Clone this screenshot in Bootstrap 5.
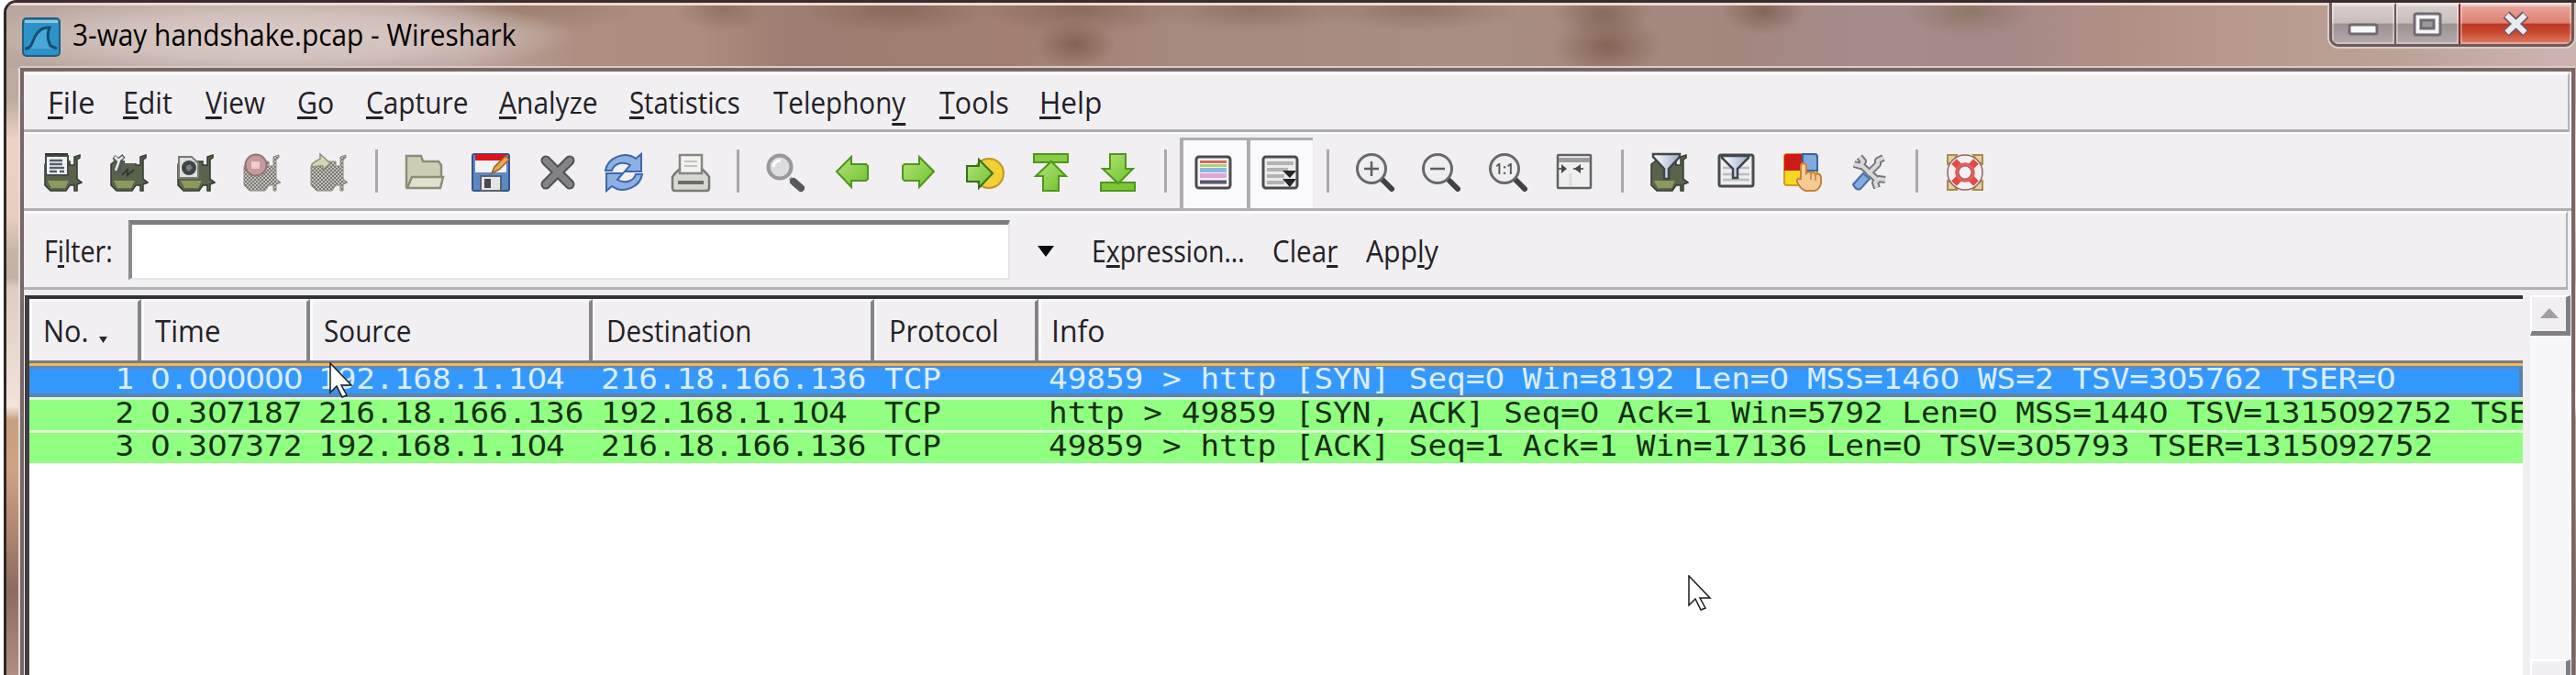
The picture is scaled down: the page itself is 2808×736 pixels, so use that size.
<!DOCTYPE html>
<html lang="en">
<head>
<meta charset="utf-8">
<meta name="viewport" content="width=device-width, initial-scale=1">
<title>3-way handshake.pcap - Wireshark</title>
<link href="https://cdn.jsdelivr.net/npm/bootstrap@5.3.0/dist/css/bootstrap.min.css" rel="stylesheet">
<style>
body{margin:0;background:#fff;font-family:"Open Sans","Noto Sans",sans-serif;font-size:32.5px;line-height:1;color:#232127;overflow:hidden}
.win{height:736px;margin-left:4px;border-top:3px solid #3a2c2e;border-left:3px solid #2d2728;border-top-left-radius:14px;overflow:hidden;position:relative;
 background:linear-gradient(180deg,#bfaaa2 0,#c0aaa0 105px,#ecd3c5 150px,#e6cdbd 235px,#c9b5a8 270px,#c3b0a4 300px,#dfcbc2 310px,#ecdcd4 400px,#f0e4dd 440px,#c8a080 455px,#cfa283 510px,#b98d75 560px,#8d6c60 640px,#b08f83 736px)}
.titlebar{height:71px;padding-left:17px;border-top:3px solid #ecd9d2;
 background:
 radial-gradient(ellipse 330px 46px at 290px 34px,#dccdc8 0,#d6c6c1cc 55%,transparent 100%),
 radial-gradient(ellipse 50px 24px at 780px 4px,#85695aaa,transparent),
 radial-gradient(ellipse 100px 26px at 970px 4px,#80604faa,transparent),
 radial-gradient(ellipse 110px 28px at 1170px 4px,#80604faa,transparent),
 radial-gradient(ellipse 44px 26px at 1165px 42px,#7c594acc,transparent),
 radial-gradient(ellipse 110px 24px at 1360px 4px,#83685baa,transparent),
 radial-gradient(ellipse 110px 24px at 1540px 4px,#83685baa,transparent),
 radial-gradient(ellipse 55px 26px at 1740px 8px,#7c5f52bb,transparent),
 radial-gradient(ellipse 60px 36px at 1745px 44px,#7c5a4bcc,transparent),
 radial-gradient(ellipse 45px 26px at 1915px 6px,#7a5c50cc,transparent),
 radial-gradient(ellipse 70px 28px at 2140px 6px,#88705fbb,transparent),
 radial-gradient(ellipse 130px 30px at 560px 0,#8a6a5699,transparent),
 linear-gradient(90deg,#baa79f 0,#bba59e 500px,#ae8e81 620px,#ae8c7f 750px,#9d7c71 860px,#a27f72 1100px,#a68a80 1300px,#a98e84 1600px,#a3867d 1880px,#a58c8a 2020px,#a58987 2180px,#b39085 2320px,#b89a8e 2450px,#bba297 2600px,#cbb4b0 2780px)}
.capsule{width:267px;height:48px;margin-top:-3px;margin-right:2px;border:3px solid #6d5a5b;border-top:0;border-radius:0 0 10px 10px;overflow:hidden;box-shadow:0 0 0 2px #dccbc6}
.capsule>div{border-top:2px solid #efe6e4;box-shadow:inset 0 0 0 2px #ffffff55}
.w-min{width:70px;background:linear-gradient(#d9d1cf 0,#c8bdbb 46%,#9d9191 50%,#b5aaab 100%);border-right:2px solid #6d5a5b}
.w-max{width:70px;background:linear-gradient(#d9d1cf 0,#c8bdbb 46%,#9d9191 50%,#b5aaab 100%);border-right:2px solid #8d2a28}
.w-close{background:linear-gradient(#e9a99f 0,#dd8272 46%,#bd3826 50%,#c8472c 70%,#dd8068 100%)}
.client{margin-left:15px;width:2785px;height:662px;border:4px solid #776766;border-left-width:4px;border-bottom:0;background:#f1eff2;box-shadow:-2px 0 0 #e5dad5,0 -2px 0 #ddcac3}
.menubar{height:66px;border-bottom:3px solid #adacae;border-right:2px solid #b2b1b3;border-top:4px solid #fcfafa;margin-right:2px;position:relative}
.lbl{display:inline-block;white-space:pre;line-height:46px}
.lbl>span{display:inline-block;transform-origin:0 50%}
.lbl u{text-decoration-thickness:3px;text-underline-offset:3px;text-decoration-skip-ink:none}
.lbl u.deep{text-underline-offset:10px}
.toolbar{height:86px;border-top:2px solid #faf9fa;border-bottom:3px solid #b1b0b3;padding-left:6.5px}
.tool{width:72.5px;height:100%;padding-top:3px}
.tool svg{width:42px;height:42px;overflow:visible}
.pressed{background:#faf9fb;border-left:4px solid #adacae;border-top:3px solid #adacae;padding-right:3px;height:77px;margin-top:4px}
.pressed svg{margin-top:-8px}
.bar-sep{width:31.3px}
.bar-sep i{display:block;width:3px;height:47px;background:#a9a8ab;margin-top:0}
.filterbar{height:86px;border-top:3px solid #faf9fa;border-bottom:3px solid #b1b0b3;margin-right:4px;border-right:2px solid #b2b1b3;padding-top:2px}
.field{width:961px;height:65px;background:#fff;border:solid;border-width:5px 2px 2px 4px;border-color:#7d7c7f #e6e4e7 #e6e4e7 #8b8a8d}
.down{width:0;height:0;border:9px solid transparent;border-top:12px solid #0b0a0d;border-bottom:0}
.list{margin-top:6px;height:420px}
.grid-pane{width:2724px;border-left:5px solid #403e42;border-top:4px solid #343237;background:#fff;margin-left:1px}
.head{height:70px;background:#f1eff2;border-bottom:3px solid #7d7c80}
.head>div{border-right:4px solid #858487;border-left:3px solid #fbfafc;border-top:3px solid #f6f5f7}
.c1{width:122px}.c2{width:184px}.c3{width:308px}.c4{width:307px}.c5{width:179px}
.pkt{height:36px;background:#91ff82;border-top:3px solid #ddfad5;font-family:"DejaVu Sans Mono",monospace;font-size:32px;color:#12300f}
.pkt>div{line-height:33px;white-space:pre;flex:none}
.pkt span.m{display:inline-block;transform:scaleX(1.073);transform-origin:0 50%;position:relative;top:-2px}
.pkt .c1 span.m{transform-origin:100% 50%}
.pkt b{font-family:"DejaVu Sans",sans-serif;font-weight:400;letter-spacing:-1.1px}
.pkt.sel{height:37px;color:#dcedff;background:#3499ff;border-top:3px solid #f1b94c;box-shadow:inset 0 4px 3px #538bcd,inset 0 -4px 2px #5d83b0,inset -4px 0 0 #5d7ea8}
.scroll{width:45px;background:#f7f6f9;margin-left:8px}
.sbtn{height:44px;width:44px;background:#f1eff2;border:solid;border-width:2px 5px 5px 2px;border-color:#fff #7f7e81 #7f7e81 #fff}
.up{width:0;height:0;border:10px solid transparent;border-bottom:11px solid #9f9ea1;border-top:0;margin-top:-3px}
.cursor{position:absolute;width:27px;height:40px}
</style>
</head>
<body>
<svg width="0" height="0" class="position-absolute">
 <defs>
  <linearGradient id="gr" x1="0" y1="0" x2="1" y2="1"><stop offset="0" stop-color="#b5e577"/><stop offset="1" stop-color="#6cc030"/></linearGradient>
  <linearGradient id="fun"><stop offset="0" stop-color="#fff"/><stop offset="1" stop-color="#9dabc9"/></linearGradient>
  <pattern id="mesh" width="4" height="4" patternUnits="userSpaceOnUse"><rect width="4" height="4" fill="#c3c2bd"/><path d="M0 0h2v2h-2zM2 2h2v2h-2z" fill="#77776f"/></pattern>
  <symbol id="nic" viewBox="0 0 42 42"><path d="M1 12L5 9H28V13H33V4L39 2V5L36 7V28L41 32L36 34V41H33V35H28L24 41H7L1 35Z" fill="#59634c" stroke="#343a30" stroke-width="1.5"/><path d="M4 30H27L23 38H8Z" fill="#8b9a5e"/></symbol>
  <symbol id="nicg" viewBox="0 0 42 42"><path d="M1 14L6 9H28V14H33V4L39 2V5L36 7V28L41 32L36 34V41H33V35H28L24 41H7L1 35Z" fill="url(#mesh)" stroke="#8c8b84" stroke-width="1"/></symbol>
  <symbol id="lens" viewBox="0 0 42 42"><path d="M29 29L39 39" stroke="#414043" stroke-width="6" stroke-linecap="round"/><circle cx="17" cy="17" r="15.5" fill="#eeeef0" stroke="#68676b" stroke-width="3"/></symbol>
 </defs>
</svg>

<div class="win">
 <div class="titlebar d-flex align-items-center">
  <svg width="42" height="43" viewBox="0 0 42 43" style="margin-top:1px"><rect x="1" y="1" width="40" height="41" rx="4" fill="#2c93c8" stroke="#215d80" stroke-width="2"/><path d="M3 3H39V6H3Z" fill="#8dc8e0"/><path d="M3 34C10 34 11 28 14 21C18 14 22 11 30 11C27 18 28 25 31 31L38 34" fill="#48a9d8" stroke="#174c70" stroke-width="3"/></svg>
  <span class="lbl text-black" style="margin-left:13px;margin-top:-5px"><span data-w="483">3-way handshake.pcap - Wireshark</span></span>
  <div class="capsule ms-auto d-flex align-self-start">
   <div class="w-min d-flex justify-content-center"><svg width="34" height="40" viewBox="0 0 34 40"><rect x="2" y="22" width="30" height="10" rx="2" fill="#f8f8f9" stroke="#716a72" stroke-width="3"/></svg></div>
   <div class="w-max d-flex justify-content-center"><svg width="34" height="40" viewBox="0 0 34 40"><rect x="3" y="10" width="28" height="23" rx="2" fill="#f4f4f5" stroke="#716a72" stroke-width="3"/><rect x="10" y="17" width="14" height="9" fill="#9d969b" stroke="#716a72" stroke-width="3"/></svg></div>
   <div class="w-close flex-fill d-flex justify-content-center"><svg width="34" height="40" viewBox="0 0 34 40"><path d="M6 11L27 31M27 11L6 31" stroke="#7c5268" stroke-width="10"/><path d="M6.500 11.500L26.500 30.500M26.500 11.500L6.500 30.500" stroke="#e9edf0" stroke-width="6"/></svg></div>
  </div>
 </div>

 <div class="client">
  <nav class="menubar d-flex align-items-center" style="padding-left:26px;padding-top:1px">
   <span class="lbl" style="width:82px"><span data-w="51"><u>F</u>ile</span></span>
   <span class="lbl" style="width:90px"><span data-w="54"><u>E</u>dit</span></span>
   <span class="lbl" style="width:100px"><span data-w="65"><u>V</u>iew</span></span>
   <span class="lbl" style="width:75px"><span data-w="40"><u>G</u>o</span></span>
   <span class="lbl" style="width:145px"><span data-w="111"><u>C</u>apture</span></span>
   <span class="lbl" style="width:142px"><span data-w="108"><u>A</u>nalyze</span></span>
   <span class="lbl" style="width:157px"><span data-w="121"><u>S</u>tatistics</span></span>
   <span class="lbl" style="width:181px"><span data-w="144">Telephon<u class="deep">y</u></span></span>
   <span class="lbl" style="width:109px"><span data-w="76"><u>T</u>ools</span></span>
   <span class="lbl"><span data-w="68"><u>H</u>elp</span></span>
  </nav>

  <div class="toolbar d-flex align-items-stretch" id="tools">
   <div class="tool"><svg viewBox="0 0 42 42"><use href="#nic"/><rect x="2" y="3" width="24" height="21" fill="#f0f3f4" stroke="#454a48" stroke-width="2"/><path d="M1 1H26" stroke="#343a30" stroke-width="2"/><path d="M6 8H20M6 12H20M6 16H22M6 20H14M17 20H22" stroke="#55606b" stroke-width="2.5"/></svg></div>
   <div class="tool"><svg viewBox="0 0 42 42"><use href="#nic"/><path d="M0 0H30V11H16V6H0Z" fill="#f1eff2"/><path d="M4 4L9 8L15 3M5 20C10 14 12 12 9 8M10 22L11 10M4 10L14 8" stroke="#55585a" stroke-width="5" fill="none"/><path d="M5 4L9 8L14 4M6 19L10 8" stroke="#e8ebea" stroke-width="2.5" fill="none"/><path d="M13 24L19 18V24L26 18" stroke="#343a30" stroke-width="2" fill="none"/></svg></div>
   <div class="tool"><svg viewBox="0 0 42 42"><use href="#nic"/><path d="M2 4H16L23 11V27H2Z" fill="#dfe1df" stroke="#777b78" stroke-width="2"/><circle cx="13" cy="16" r="8" fill="#3f4546"/><path d="M10 14L14 12L17 16L13 20L10 18Z" fill="#777e7d"/></svg></div>
   <div class="tool"><svg viewBox="0 0 42 42"><use href="#nicg"/><circle cx="14" cy="13" r="11.5" fill="#c99a9c" stroke="#947577" stroke-width="2"/><path d="M9 9H18V17H9Z" fill="#e8cdcc"/></svg></div>
   <div class="tool"><svg viewBox="0 0 42 42"><use href="#nicg"/><path d="M2 12C7 8 9 7 11 6V1L22 11L14 18V14C10 13 7 15 2 15Z" fill="#d3d8b4" stroke="#8f927c" stroke-width="1.5"/></svg></div>
   <div class="bar-sep"><i></i></div>
   <div class="tool"><svg viewBox="0 0 42 42"><path d="M1 38V3H17L19 9H36L39 13V27" fill="#cdceb5" stroke="#8d8e76" stroke-width="2.5"/><path d="M2 38L7 26H41L38 38Z" fill="#e0e1cf" stroke="#8d8e76" stroke-width="2.5"/></svg></div>
   <div class="tool"><svg viewBox="0 0 42 42"><rect x="1" y="1" width="40" height="40" rx="2" fill="#5c88c6" stroke="#335689" stroke-width="2"/><rect x="4" y="1" width="34" height="20" fill="#f2f2f3"/><rect x="4" y="1" width="34" height="7" fill="#d8151c"/><rect x="10" y="25" width="22" height="16" fill="#e3e5e4" stroke="#5a636f" stroke-width="2"/><rect x="14" y="28" width="7" height="10" fill="#48484d"/><path d="M22 22L25 15L37 3L41 7L30 18Z" fill="#e6a856" stroke="#98611e" stroke-width="1.5"/></svg></div>
   <div class="tool"><svg viewBox="0 0 42 42"><path d="M8 8L34 34M34 8L8 34" stroke="#515154" stroke-width="11" stroke-linecap="round"/><path d="M8 8L34 34M34 8L8 34" stroke="#838386" stroke-width="7" stroke-linecap="round"/></svg></div>
   <div class="tool"><svg viewBox="0 0 42 42"><path id="rf" d="M1 19C3 5 22 -3 34 6L40 1V20H22L28 13C19 8 10 12 8 19Z" fill="#8ab1e2" stroke="#3d66ad" stroke-width="2"/><use href="#rf" transform="rotate(180 21 21)"/></svg></div>
   <div class="tool"><svg viewBox="0 0 42 42"><path d="M3 23L8 18H34L39 23L41 26V38Q41 41 38 41H4Q1 41 1 38V26Z" fill="#d7d7d3" stroke="#797973" stroke-width="2.5"/><path d="M9 22V2H33V22Z" fill="#f2f2f1" stroke="#868682" stroke-width="2.5"/><path d="M14 9H28M14 14H28" stroke="#c2c2c0" stroke-width="2"/><path d="M7 32H35" stroke="#6d6d66" stroke-width="4"/></svg></div>
   <div class="bar-sep"><i></i></div>
   <div class="tool"><svg viewBox="0 0 42 42"><path d="M26 27L30 31" stroke="#a3a3a6" stroke-width="4"/><path d="M30 31L38 38" stroke="#58585b" stroke-width="8" stroke-linecap="round"/><circle cx="15" cy="15" r="12.5" fill="#dcdce0" stroke="#98989b" stroke-width="4"/><path d="M8 15Q9 8 16 8" stroke="#fff" stroke-width="3" fill="none"/></svg></div>
   <div class="tool"><svg viewBox="0 0 42 42"><path d="M4 20L20 4V12H36L38 14V28L36 30H20V37Z" fill="url(#gr)" stroke="#4e961c" stroke-width="2"/></svg></div>
   <div class="tool"><svg viewBox="0 0 42 42"><path d="M38 20L22 4V12H6L4 14V28L6 30H22V37Z" fill="url(#gr)" stroke="#4e961c" stroke-width="2"/></svg></div>
   <div class="tool"><svg viewBox="0 0 42 42"><circle cx="25" cy="22" r="16" fill="#f1cf35" stroke="#c29522" stroke-width="2"/><path d="M29 22L14 7V14H1V31H14V38Z" fill="url(#gr)" stroke="#35701c" stroke-width="2"/></svg></div>
   <div class="tool"><svg viewBox="0 0 42 42"><rect x="2" y="1" width="37" height="9" fill="#86cc44" stroke="#4e961c" stroke-width="2"/><path d="M21 9L37 25H29V41H12V25H4Z" fill="url(#gr)" stroke="#4e961c" stroke-width="2"/></svg></div>
   <div class="tool"><svg viewBox="0 0 42 42"><rect x="2" y="32" width="37" height="9" fill="#7cc63a" stroke="#4e961c" stroke-width="2"/><path d="M21 33L37 17H29V1H12V17H4Z" fill="url(#gr)" stroke="#4e961c" stroke-width="2"/></svg></div>
   <div class="bar-sep"><i></i></div>
   <div class="tool pressed"><svg viewBox="0 0 42 42"><rect x="2" y="4" width="37" height="34" rx="3" fill="#f6f6f7" stroke="#4b4b4e" stroke-width="3"/><path d="M6 9.500H35" stroke="#cf6c55" stroke-width="3"/><path d="M6 13.500H35" stroke="#a9d37b" stroke-width="3"/><path d="M6 18.500H35" stroke="#8cb9dc" stroke-width="5"/><path d="M6 24.500H35" stroke="#e3a3dd" stroke-width="5"/><path d="M6 31.500H35" stroke="#5b5370" stroke-width="4"/></svg></div>
   <div class="tool pressed"><svg viewBox="0 0 42 42"><rect x="2" y="4" width="37" height="34" rx="3" fill="#ececed" stroke="#4b4b4e" stroke-width="3"/><path d="M6 11H35M6 18H29M6 25H25M6 32H25" stroke="#b3b3b5" stroke-width="4"/><path d="M23 19H38L31 27ZM23 28H38L31 37Z" fill="#252528"/></svg></div>
   <div class="bar-sep"><i></i></div>
   <div class="tool"><svg viewBox="0 0 42 42"><use href="#lens"/><path d="M9 17H25M17 9V25" stroke="#5e5e61" stroke-width="2.500"/></svg></div>
   <div class="tool"><svg viewBox="0 0 42 42"><use href="#lens"/><path d="M9 17H25" stroke="#5e5e61" stroke-width="2.500"/></svg></div>
   <div class="tool"><svg viewBox="0 0 42 42"><use href="#lens"/><text x="17" y="23" text-anchor="middle" font-size="17" font-weight="600" textLength="21" lengthAdjust="spacingAndGlyphs" fill="#4e4e51">1:1</text></svg></div>
   <div class="tool"><svg viewBox="0 0 42 42"><rect x="3" y="2" width="36" height="36" rx="1" fill="#efefef" stroke="#636366" stroke-width="2.500"/><path d="M4 5H38V10H4Z" fill="#9b9b9e"/><path d="M4 17H11M20 17H31" stroke="#6a6a6d" stroke-width="2"/><path d="M7 12L13 17L7 22ZM28 12L21 17L28 22Z" fill="#4a4a4d"/><path d="M17 22V36" stroke="#dcdcdc" stroke-width="3"/></svg></div>
   <div class="bar-sep"><i></i></div>
   <div class="tool"><svg viewBox="0 0 42 42"><use href="#nic"/><path d="M3 1H32V4L20 17V28H15V17L3 4Z" fill="url(#fun)" stroke="#3f464b" stroke-width="2.500"/></svg></div>
   <div class="tool"><svg viewBox="0 0 42 42"><rect x="2" y="2" width="37" height="34" rx="2" fill="#ededee" stroke="#4b4b4e" stroke-width="3"/><path d="M6 16H35M6 23H35M6 29H35" stroke="#bdbdbf" stroke-width="2.500"/><path d="M5 3H34V5L22 17V27H17V17L5 5Z" fill="url(#fun)" stroke="#3f464b" stroke-width="2.500"/></svg></div>
   <div class="tool"><svg viewBox="0 0 42 42"><rect x="1" y="1" width="36" height="34" rx="3" fill="#f6d823" stroke="#d49a22" stroke-width="2"/><path d="M1 19V4Q1 1 4 1H21V19Z" fill="#cf1b18"/><path d="M21 1H34Q37 1 37 4V19H21Z" fill="#82a9df" stroke="#3a62a7" stroke-width="2"/><path d="M19 14Q19 11 22 11Q25 11 25 14V22Q28 19 30 22Q33 20 35 23Q40 21 41 26V33Q39 40 34 41H24Q18 39 15 31Q14 27 19 28Z" fill="#f7c993" stroke="#c4813e" stroke-width="2"/><path d="M30 23V29M35 24V30" stroke="#c4813e" stroke-width="1.500"/></svg></div>
   <div class="tool"><svg viewBox="0 0 42 42"><path d="M10 4L14 9L11 14L4 12M13 14L28 28M36 5L30 8V12L19 23M38 29L31 28L27 32L29 38" stroke="#77777a" stroke-width="8" fill="none" stroke-linejoin="round"/><path d="M10 4L14 9L11 14L4 12M13 14L28 28M36 5L30 8V12L19 23M38 29L31 28L27 32L29 38" stroke="#d9d9da" stroke-width="4" fill="none" stroke-linejoin="round"/><path d="M14 22L21 28L11 39Q6 41 3 34Z" fill="#83abe0" stroke="#456fae" stroke-width="2"/></svg></div>
   <div class="bar-sep"><i></i></div>
   <div class="tool"><svg viewBox="0 0 42 42"><path d="M2 2H12L9 9L2 12ZM40 2V12L34 9L30 2ZM2 40V30L9 33L12 40ZM40 40H30L34 33L40 30Z" fill="#e3cf9c" stroke="#a98b4d" stroke-width="2"/><circle cx="21" cy="21" r="13" fill="none" stroke="#94605f" stroke-width="13.500"/><circle cx="21" cy="21" r="13" fill="none" stroke="#f3f0ef" stroke-width="10.500"/><path d="M9 9L15 15M33 9L27 15M9 33L15 27M33 33L27 27" stroke="#e14b46" stroke-width="8"/><circle cx="21" cy="21" r="9" fill="none" stroke="#e0605b" stroke-width="3.500"/><circle cx="21" cy="21" r="7" fill="#f3f1f3" stroke="#b05c5c" stroke-width="1.200"/></svg></div>
  </div>

  <div class="filterbar d-flex align-items-center" style="padding-left:22px">
   <span class="lbl" style="width:92px"><span data-w="75">F<u>i</u>lter:</span></span>
   <div class="field" style="margin-top:-3px"></div>
   <div class="down" style="margin-left:30px"></div>
   <span class="lbl" style="margin-left:41px;width:197px"><span data-w="167">E<u>x</u>pression...</span></span>
   <span class="lbl" style="width:102px"><span data-w="71">Clea<u>r</u></span></span>
   <span class="lbl"><span data-w="79">App<u>l</u>y</span></span>
  </div>

  <div class="list d-flex">
   <div class="grid-pane overflow-hidden">
    <div class="head d-flex">
     <div class="c1 d-flex align-items-center" style="padding-left:12px"><span class="lbl"><span data-w="50">No.</span></span><svg width="10" height="8" style="margin:20px 0 0 11px"><path d="M0 0H9L4.500 7Z" fill="#29272d"/></svg></div>
     <div class="c2 d-flex align-items-center" style="padding-left:12px"><span class="lbl"><span data-w="71">Time</span></span></div>
     <div class="c3 d-flex align-items-center" style="padding-left:12px"><span class="lbl"><span data-w="95">Source</span></span></div>
     <div class="c4 d-flex align-items-center" style="padding-left:12px"><span class="lbl"><span data-w="158">Destination</span></span></div>
     <div class="c5 d-flex align-items-center" style="padding-left:13px"><span class="lbl"><span data-w="120">Protocol</span></span></div>
     <div class="flex-fill d-flex align-items-center border-end-0" style="padding-left:11px"><span class="lbl"><span data-w="59">Info</span></span></div>
    </div>
    <div id="packets"></div>
   </div>
   <div class="scroll d-flex flex-column justify-content-between">
    <div class="sbtn d-flex align-items-center justify-content-center"><div class="up"></div></div>
    <div class="sbtn" style="margin-bottom:-21px"></div>
   </div>
  </div>
 </div>
 <svg class="cursor" style="left:352px;top:392px" viewBox="0 0 27 40"><path d="M1 1V33L8 26L14 38L19 36L13 25H24Z" fill="#fff" stroke="#1b1b1b" stroke-width="1.500"/></svg>
 <svg class="cursor" style="left:1833px;top:624px" viewBox="0 0 27 40"><path d="M1 1V33L8 26L14 38L19 36L13 25H24Z" fill="#fff" stroke="#1b1b1b" stroke-width="1.500"/></svg>
</div>
<script src="https://cdn.jsdelivr.net/npm/bootstrap@5.3.0/dist/js/bootstrap.bundle.min.js"></script>
<script>
const packets = [
 ['1','0.000000','192.168.1.104','216.18.166.136','TCP','49859 > http [SYN] Seq=0 Win=8192 Len=0 MSS=1460 WS=2 TSV=305762 TSER=0'],
 ['2','0.307187','216.18.166.136','192.168.1.104','TCP','http > 49859 [SYN, ACK] Seq=0 Ack=1 Win=5792 Len=0 MSS=1440 TSV=1315092752 TSE'],
 ['3','0.307372','192.168.1.104','216.18.166.136','TCP','49859 > http [ACK] Seq=1 Ack=1 Win=17136 Len=0 TSV=305793 TSER=1315092752']
];
const pads = [0, 10, 9, 9, 11, 11];
// Plain zeros come from the proportional face; the mono face dots them.
const mono = s => s.replace('>', '&gt;').replace(/0/g, '<b>0</b>');
document.getElementById('packets').innerHTML = packets.map((p, r) =>
 `<div class="pkt d-flex${r ? '' : ' sel'}">` + p.map((t, i) =>
  `<div class="c${i + 1}${i ? '' : ' text-end'}" style="${i ? 'padding-left:' + pads[i] : 'padding-right:8'}px"><span class="m">${mono(t)}</span></div>`).join('') + '</div>').join('');
document.querySelectorAll('.tool, .bar-sep').forEach(t => t.classList.add('d-flex', 'align-items-center', 'justify-content-center', 'flex-shrink-0'));
document.querySelectorAll('[data-w]').forEach(e => {
 const w = +e.dataset.w, n = e.offsetWidth;
 e.style.transform = `scaleX(${w / n})`;
 e.style.marginRight = (w - n) + 'px';
});
</script>
</body>
</html>
